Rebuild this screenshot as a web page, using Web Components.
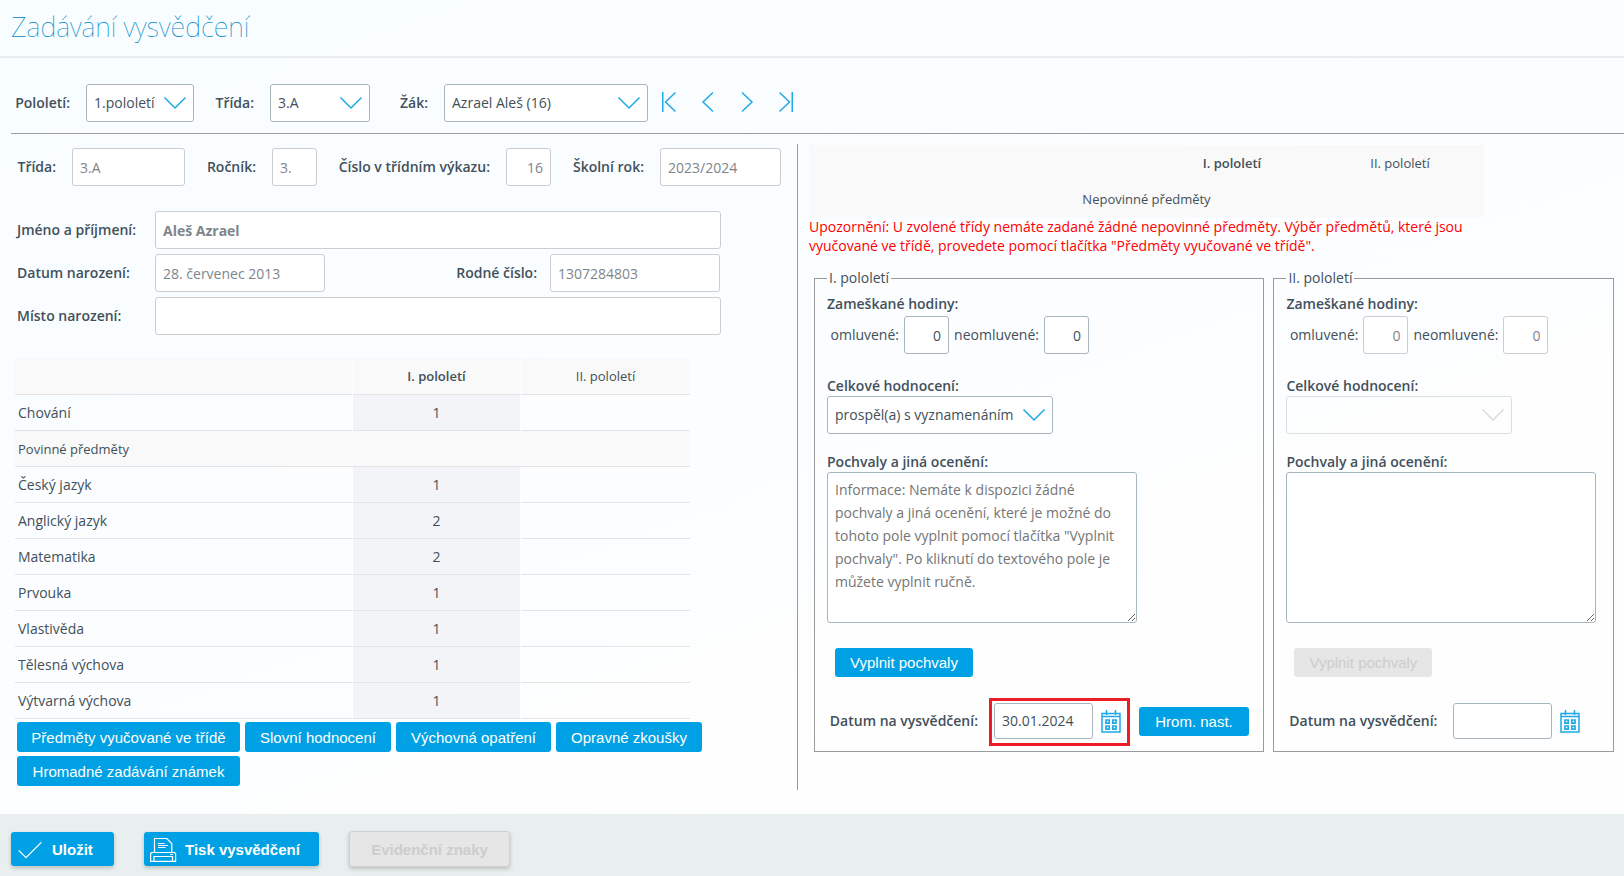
<!DOCTYPE html>
<html lang="cs">
<head>
<meta charset="utf-8">
<title>Zadávání vysvědčení</title>
<style>
  html, body { margin: 0; }
  body {
    --ui: "Open Sans", "Noto Sans", sans-serif;
    --btn: "Liberation Sans", Arial, sans-serif;
    --text: #42505a;
    --muted: #7d858b;
    --blue: #00a1e4;
    --line: #a9b5bd;
    --line-soft: #cbcdd0;
    --rule: #9b9b9b;
    font: 14px/20px var(--ui);
    color: var(--text);
    background: linear-gradient(160deg, #f8fdff 0%, #fbfdff 40%, #fefefe 75%);
  }
</style>
</head>
<body>
<report-page></report-page>

<script>
const define = (name, html, setup) => {
  const tpl = document.createElement('template');
  tpl.innerHTML = html;
  customElements.define(name, class extends HTMLElement {
    constructor() {
      super();
      this.attachShadow({ mode: 'open' }).append(tpl.content.cloneNode(true));
    }
    connectedCallback() {
      if (this.ready) return;
      this.ready = true;
      if (setup) setup.call(this, this.shadowRoot);
    }
  });
};

/* Icons */
const ICONS = {
  first: ['0 0 14 22', '<path d="M.75 1v20M13.5 1.5 3.5 11l10 9.5"/>'],
  prev: ['0 0 14 22', '<path d="M12 1.5 2 11l10 9.5"/>'],
  next: ['0 0 14 22', '<path d="M2 1.5 12 11 2 20.5"/>'],
  last: ['0 0 14 22', '<path d="M13.25 1v20M.5 1.5 10.5 11 .5 20.5"/>'],
  check: ['0 0 28 18', '<path d="M2.7 9.3 10 16.6 25.3 1.4"/>'],
  print: ['0 0 28 26', '<path d="M5.5 15.5v-14h12.300l5 5v9M5 15.500H2.600l-1 1v7.800h25v-7.800l-1-1H5zM5 24v-4.500h18.500V24M9 6.500h6.500M9 8.500h10M9 10.500h7.500M21 17.500h3"/>'],
  calendar: ['0 0 20 24', '<path d="M1 4.5h18v18.500H1zM1 7.500h18M5.500 1v5M14.500 1v5"/><path stroke-width="1.7" d="M5 11h3.200v3.200H5zM11.800 11H15v3.200h-3.200zM5 17h3.200v3.200H5zM11.800 17H15v3.200h-3.200z"/>']
};
define('sx-icon', `
  <style>
    :host { display: block; flex: none; }
    svg { display: block; fill: none; stroke: currentColor; stroke-width: var(--stroke, 1.5); }
  </style>`, function (root) {
  const [box, body] = ICONS[this.getAttribute('name')];
  const [, , w, h] = box.split(' ');
  root.innerHTML += `<svg viewBox="${box}" width="${w}" height="${h}" aria-hidden="true">${body}</svg>`;
});

/* Text field with its label */
define('sx-field', `
  <style>
    :host { display: flex; align-items: center; }
    label { width: var(--label-width); box-sizing: border-box; padding-right: var(--label-gap, 16px); text-align: var(--label-align, right); font-weight: var(--label-weight, 600); white-space: nowrap; flex: none; }
    input { box-sizing: border-box; width: var(--control-width); height: 38px; margin: 0; padding: 0 7px; border: 1px solid var(--line); border-radius: 3px; background: #fff; color: var(--text); font: inherit; text-align: var(--value-align, left); outline: none; }
    input:disabled { border-color: var(--line-soft); color: var(--muted); }
    :host([strong]) input { font-weight: 700; }
  </style>
  <label for="i"></label><input id="i" type="text">`, function (root) {
  root.querySelector('label').textContent = this.getAttribute('label');
  const input = root.querySelector('input');
  input.value = this.getAttribute('value') || '';
  input.disabled = this.hasAttribute('disabled');
});

/* Drop-down with its label */
const chevron = c => `url("data:image/svg+xml,%3Csvg xmlns='http://www.w3.org/2000/svg' width='24' height='14' fill='none' stroke='%23${c}' stroke-width='1.5'%3E%3Cpath d='M1.5 1.5 12 12 22.5 1.5'/%3E%3C/svg%3E")`;
define('sx-select', `
  <style>
    :host { display: flex; align-items: center; }
    :host([stacked]) { display: block; }
    label { display: block; width: var(--label-width); box-sizing: border-box; padding-right: 16px; text-align: right; font-weight: 600; white-space: nowrap; flex: none; }
    :host([stacked]) label { width: auto; text-align: left; }
    select { appearance: none; box-sizing: border-box; display: block; width: var(--control-width); height: 38px; margin: 0; padding: 0 0 1px 7px; border: 1px solid var(--line); border-radius: 3px; background: #fff ${chevron('1fa9e6')} right 6px center / 24px 14px no-repeat; color: var(--text); font: inherit; outline: none; }
    select:disabled { border-color: #dcdfe1; background-color: transparent; background-image: ${chevron('d8dadc')}; opacity: 1; }
  </style>
  <label for="s"></label><select id="s"><option></option></select>`, function (root) {
  root.querySelector('label').textContent = this.getAttribute('label');
  root.querySelector('option').textContent = this.getAttribute('value') || '';
  root.querySelector('select').disabled = this.hasAttribute('disabled');
});

/* Multi-line field with its label */
define('sx-textarea', `
  <style>
    :host { display: block; }
    label { display: block; font-weight: 600; }
    textarea { display: block; box-sizing: border-box; width: 310px; max-width: 100%; height: 151px; margin: 0; padding: 5px 7px; border: 1px solid var(--line); border-radius: 3px; background: #fff; font: inherit; line-height: 23px; color: var(--text); resize: both; outline: none; }
    textarea::placeholder { color: #757575; opacity: 1; }
  </style>
  <label for="t"></label><textarea id="t"></textarea>`, function (root) {
  root.querySelector('label').textContent = this.getAttribute('label');
  root.querySelector('textarea').placeholder = this.getAttribute('placeholder') || '';
});

/* Buttons */
define('sx-button', `
  <style>
    :host { display: block; flex: none; }
    button { box-sizing: border-box; display: flex; align-items: center; justify-content: center; width: var(--w, auto); height: var(--h, 30px); margin: 0; padding: 1px 0 0; border: 0; border-radius: 3px; background: var(--blue); color: #fff; font: 15px/20px var(--btn); white-space: nowrap; }
    button:disabled { background: #e6e6e6; color: #cdcdcd; }
    :host([big]) button { height: 34px; font-weight: 700; box-shadow: 0 2px 4px rgba(0, 0, 0, .2); }
    :host([icon]) button { justify-content: flex-start; padding-left: 5px; }
    :host([big]) button:disabled { height: 36px; border: 1px solid #d0d0d0; }
    ::slotted(sx-icon) { margin-right: 8px; --stroke: 1.2; }
  </style>
  <button type="button"><slot name="icon"></slot><slot></slot></button>`, function (root) {
  root.querySelector('button').disabled = this.hasAttribute('disabled');
});
define('sx-icon-button', `
  <style>
    :host { display: block; flex: none; color: #1fa9e6; }
    button { display: block; margin: 0; padding: 0; border: 0; background: none; color: inherit; }
  </style>
  <button type="button"><slot></slot></button>`, function (root) {
  root.querySelector('button').setAttribute('aria-label', this.getAttribute('label'));
});

/* Header and filters */
define('page-title', `
  <style>
    :host { display: block; border-bottom: 2px solid #e9eded; }
    h1 { margin: 0; padding: 7px 11px 9px; font: 100 27px/40px "Noto Sans", sans-serif; color: #0087c8; }
  </style>
  <h1><slot></slot></h1>`);

define('filter-bar', `
  <style>
    :host { display: block; padding: 26px 0 0 11px; }
    .bar { display: flex; align-items: center; padding: 0 3px 11px; border-bottom: 1px solid var(--rule); }
    .half { --label-width: 72px; --control-width: 108px; }
    .class { --label-width: 76px; --control-width: 100px; }
    .pupil { --label-width: 74px; --control-width: 204px; }
    nav { display: flex; gap: 25px; padding: 0 0 2px 14px; }
  </style>
  <div class="bar">
    <sx-select class="half" label="Pololetí:" value="1.pololetí"></sx-select>
    <sx-select class="class" label="Třída:" value="3.A"></sx-select>
    <sx-select class="pupil" label="Žák:" value="Azrael Aleš (16)"></sx-select>
    <nav>
      <sx-icon-button label="První"><sx-icon name="first"></sx-icon></sx-icon-button>
      <sx-icon-button label="Předchozí"><sx-icon name="prev"></sx-icon></sx-icon-button>
      <sx-icon-button label="Další"><sx-icon name="next"></sx-icon></sx-icon-button>
      <sx-icon-button label="Poslední"><sx-icon name="last"></sx-icon></sx-icon-button>
    </nav>
  </div>`);

/* Pupil details */
define('pupil-details', `
  <style>
    :host { display: block; }
    .row { display: flex; }
    .a { --label-width: 58px; --control-width: 113px; }
    .b { --label-width: 87px; --control-width: 45px; }
    .c { --label-width: 189px; --control-width: 45px; --value-align: right; }
    .d { --label-width: 109px; --control-width: 121px; }
    .person { display: grid; gap: 5px; padding: 25px 0 0 3px; --label-align: left; --label-width: 138px; --label-gap: 0; }
    .wide { --control-width: 566px; }
    .birth { display: flex; --control-width: 170px; }
    .number { --label-align: right; --label-width: 225px; --label-gap: 13px; }
  </style>
  <div class="row">
    <sx-field class="a" label="Třída:" value="3.A" disabled></sx-field>
    <sx-field class="b" label="Ročník:" value="3." disabled></sx-field>
    <sx-field class="c" label="Číslo v třídním výkazu:" value="16" disabled></sx-field>
    <sx-field class="d" label="Školní rok:" value="2023/2024" disabled></sx-field>
  </div>
  <div class="person">
    <sx-field class="wide" strong label="Jméno a příjmení:" value="Aleš Azrael" disabled></sx-field>
    <div class="birth">
      <sx-field label="Datum narození:" value="28. červenec 2013" disabled></sx-field>
      <sx-field class="number" label="Rodné číslo:" value="1307284803" disabled></sx-field>
    </div>
    <sx-field class="wide" label="Místo narození:" disabled></sx-field>
  </div>`);

/* Marks */
define('marks-table', `
  <style>
    :host { display: block; }
    table { width: 677px; border-collapse: separate; border-spacing: 1px 0; table-layout: fixed; }
    th, td { box-sizing: border-box; height: 36px; padding: 0 3px; border-bottom: 1px solid #e4e4e4; text-align: left; font-weight: 400; }
    thead th { height: 37px; background: #f9f9f9; text-align: center; font-size: 13px; }
    thead .now { font-weight: 600; }
    .group th { background: #f9f9f9; font-size: 13px; }
    .now, .next { text-align: center; }
    td.now { background: #f2f4f7; }
    .c2 { width: 167px; } .c3 { width: 169px; }
  </style>
  <table>
    <colgroup><col><col class="c2"><col class="c3"></colgroup>
    <thead><tr><th></th><th class="now" scope="col">I. pololetí</th><th scope="col">II. pololetí</th></tr></thead>
    <tbody></tbody>
  </table>`, function (root) {
  const rows = [['Chování', 1], ['Povinné předměty'], ['Český jazyk', 1], ['Anglický jazyk', 2], ['Matematika', 2], ['Prvouka', 1], ['Vlastivěda', 1], ['Tělesná výchova', 1], ['Výtvarná výchova', 1]];
  root.querySelector('tbody').innerHTML = rows.map(([name, mark]) => mark
    ? `<tr><th scope="row">${name}</th><td class="now">${mark}</td><td class="next"></td></tr>`
    : `<tr class="group"><th colspan="3">${name}</th></tr>`).join('');
});

define('optional-table', `
  <style>
    :host { display: block; }
    table { width: 675px; max-width: 100%; border-collapse: collapse; table-layout: fixed; background: #f9f9f9; font-size: 13px; }
    th { height: 36px; padding: 0; font-weight: 400; text-align: center; }
    .now { font-weight: 600; }
    .c { width: 168px; }
    p { width: 675px; max-width: 100%; margin: 0; line-height: 19px; color: #f00; }
  </style>
  <table>
    <colgroup><col><col class="c"><col class="c"></colgroup>
    <tr><th></th><th class="now" scope="col">I. pololetí</th><th scope="col">II. pololetí</th></tr>
    <tr><th colspan="3">Nepovinné předměty</th></tr>
  </table>
  <p>Upozornění: U zvolené třídy nemáte zadané žádné nepovinné předměty. Výběr předmětů, které jsou vyučované ve třídě, provedete pomocí tlačítka "Předměty vyučované ve třídě".</p>`);

/* Half-year panel */
define('half-year', `
  <style>
    :host { display: block; min-width: 0; }
    fieldset { box-sizing: border-box; min-width: 0; margin: 0; padding: 6px 8px 5px 12px; border: 1px solid var(--rule); }
    legend { padding: 0 2px; }
    .caption { font-weight: 600; }
    .hours { display: flex; margin: 2px 0 22px; --label-weight: 400; --label-gap: 5px; --control-width: 45px; --value-align: right; }
    .excused { --label-width: 77px; }
    .unexcused { --label-width: 95px; }
    .result { --control-width: 226px; margin-bottom: 18px; }
    .praise { padding: 25px 0 21px 8px; --w: 138px; --h: 29px; }
    .date { display: flex; align-items: center; gap: 9px; --h: 29px; --w: 110px; }
    .pick { display: flex; align-items: center; }
    .pick > label { box-sizing: border-box; width: 162px; padding: 0 11px 2px 0; text-align: right; font-weight: 600; white-space: nowrap; }
    .box { display: flex; align-items: center; gap: 8px; padding: 2px 6px 4px 2px; border: 3px solid transparent; }
    :host([marked]) .box { border-color: #ee1c25; }
    input { box-sizing: border-box; width: 99px; height: 36px; margin: 0; padding: 0 7px 2px; border: 1px solid var(--line); border-radius: 3px; background: #fff; color: var(--text); font: inherit; outline: none; }
    ::slotted(sx-button) { margin-bottom: 2px; }
  </style>
  <fieldset>
    <legend></legend>
    <div class="caption">Zameškané hodiny:</div>
    <div class="hours"></div>
    <div class="result"></div>
    <sx-textarea label="Pochvaly a jiná ocenění:"></sx-textarea>
    <div class="praise"></div>
    <div class="date">
      <div class="pick">
        <label for="date">Datum na vysvědčení:</label>
        <div class="box">
          <input id="date" type="text">
          <sx-icon-button label="Kalendář"><sx-icon name="calendar"></sx-icon></sx-icon-button>
        </div>
      </div>
      <slot></slot>
    </div>
  </fieldset>`, function (root) {
  const off = this.hasAttribute('disabled') ? 'disabled' : '';
  const $ = s => root.querySelector(s);
  $('legend').textContent = this.getAttribute('name');
  $('.hours').innerHTML = `<sx-field class="excused" label="omluvené:" value="0" ${off}></sx-field><sx-field class="unexcused" label="neomluvené:" value="0" ${off}></sx-field>`;
  $('.result').innerHTML = `<sx-select stacked label="Celkové hodnocení:" value="${this.getAttribute('result') || ''}" ${off}></sx-select>`;
  $('.praise').innerHTML = `<sx-button ${off}>Vyplnit pochvaly</sx-button>`;
  $('#date').value = this.getAttribute('date') || '';
  if (!off) $('sx-textarea').shadowRoot.querySelector('textarea').placeholder = 'Informace: Nemáte k dispozici žádné pochvaly a jiná ocenění, které je možné do tohoto pole vyplnit pomocí tlačítka "Vyplnit pochvaly". Po kliknutí do textového pole je můžete vyplnit ručně.';
});

define('action-footer', `
  <style>
    :host { display: flex; align-items: center; gap: 30px; padding: 17px 11px 9px; background: #e9eeef; }
    .save { --w: 103px; } .print { --w: 175px; } .marks { --w: 161px; }
  </style>
  <sx-button big icon class="save"><sx-icon slot="icon" name="check"></sx-icon>Uložit</sx-button>
  <sx-button big icon class="print"><sx-icon slot="icon" name="print"></sx-icon>Tisk vysvědčení</sx-button>
  <sx-button big class="marks" disabled>Evidenční znaky</sx-button>`);

define('report-page', `
  <style>
    :host { display: flex; flex-direction: column; min-height: 100vh; }
    main { flex: 1; display: grid; grid-template-columns: calc(50% - 14px) 1fr; align-items: start; padding: 10px 0 24px; }
    .left { box-sizing: border-box; height: 100%; padding: 4px 0 4px 14px; border-right: 1px solid var(--rule); }
    marks-table { margin-top: 23px; }
    .buttons { display: flex; flex-wrap: wrap; gap: 4px 5px; max-width: 700px; padding: 3px 0 0 3px; }
    .w1 { --w: 223px; } .w2 { --w: 146px; } .w3 { --w: 155px; }
    .right { padding: 1px 10px 0 11px; min-width: 0; }
    .halves { display: grid; grid-template-columns: 451fr 341fr; gap: 9px; align-items: stretch; padding: 13px 0 0 5px; }
  </style>
  <page-title>Zadávání vysvědčení</page-title>
  <filter-bar></filter-bar>
  <main>
    <section class="left">
      <pupil-details></pupil-details>
      <marks-table></marks-table>
      <div class="buttons">
        <sx-button class="w1">Předměty vyučované ve třídě</sx-button>
        <sx-button class="w2">Slovní hodnocení</sx-button>
        <sx-button class="w3">Výchovná opatření</sx-button>
        <sx-button class="w2">Opravné zkoušky</sx-button>
        <sx-button class="w1">Hromadné zadávání známek</sx-button>
      </div>
    </section>
    <section class="right">
      <optional-table></optional-table>
      <div class="halves">
        <half-year name="I. pololetí" result="prospěl(a) s vyznamenáním" date="30.01.2024" marked><sx-button>Hrom. nast.</sx-button></half-year>
        <half-year name="II. pololetí" disabled></half-year>
      </div>
    </section>
  </main>
  <action-footer></action-footer>`);
</script>
</body>
</html>
